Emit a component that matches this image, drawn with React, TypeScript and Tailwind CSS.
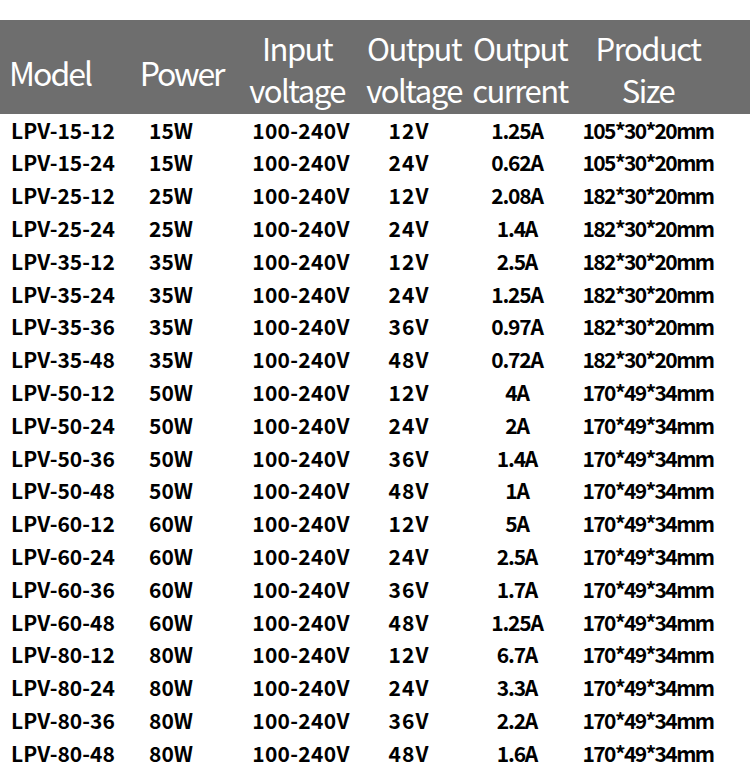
const rows: [string, string, string, string, string, string][] = [
  ["LPV-15-12", "15W", "100-240V", "12V", "1.25A", "105*30*20mm"],
  ["LPV-15-24", "15W", "100-240V", "24V", "0.62A", "105*30*20mm"],
  ["LPV-25-12", "25W", "100-240V", "12V", "2.08A", "182*30*20mm"],
  ["LPV-25-24", "25W", "100-240V", "24V", "1.4A", "182*30*20mm"],
  ["LPV-35-12", "35W", "100-240V", "12V", "2.5A", "182*30*20mm"],
  ["LPV-35-24", "35W", "100-240V", "24V", "1.25A", "182*30*20mm"],
  ["LPV-35-36", "35W", "100-240V", "36V", "0.97A", "182*30*20mm"],
  ["LPV-35-48", "35W", "100-240V", "48V", "0.72A", "182*30*20mm"],
  ["LPV-50-12", "50W", "100-240V", "12V", "4A", "170*49*34mm"],
  ["LPV-50-24", "50W", "100-240V", "24V", "2A", "170*49*34mm"],
  ["LPV-50-36", "50W", "100-240V", "36V", "1.4A", "170*49*34mm"],
  ["LPV-50-48", "50W", "100-240V", "48V", "1A", "170*49*34mm"],
  ["LPV-60-12", "60W", "100-240V", "12V", "5A", "170*49*34mm"],
  ["LPV-60-24", "60W", "100-240V", "24V", "2.5A", "170*49*34mm"],
  ["LPV-60-36", "60W", "100-240V", "36V", "1.7A", "170*49*34mm"],
  ["LPV-60-48", "60W", "100-240V", "48V", "1.25A", "170*49*34mm"],
  ["LPV-80-12", "80W", "100-240V", "12V", "6.7A", "170*49*34mm"],
  ["LPV-80-24", "80W", "100-240V", "24V", "3.3A", "170*49*34mm"],
  ["LPV-80-36", "80W", "100-240V", "36V", "2.2A", "170*49*34mm"],
  ["LPV-80-48", "80W", "100-240V", "48V", "1.6A", "170*49*34mm"],
];

function HeadCell({ lines, className }: { lines: string[]; className: string }) {
  return (
    <div className={`flex flex-col items-center justify-center whitespace-nowrap ${className}`}>
      {lines.map((l) => (
        <span key={l} className="leading-[42px]">
          {l}
        </span>
      ))}
    </div>
  );
}

export default function App() {
  return (
    <div
      className="w-[750px] h-[770px] bg-white overflow-hidden"
      style={{ fontFamily: '"Noto Sans CJK SC", "Noto Sans", sans-serif' }}
    >
      <div className="h-[20px]" />
      {/* header band */}
      <div className="h-[94px] bg-[#6e6e6e] text-white text-[31px] tracking-[-1.5px] font-normal flex items-center pt-[3px]">
        <div className="w-[120px] pl-[9px] text-[32px] tracking-[-2px] pt-[6px] whitespace-nowrap">Model</div>
        <HeadCell lines={["Power"]} className="w-[123px] text-[32px] tracking-[-2.2px] pt-[6px]" />
        <HeadCell lines={["Input", "voltage"]} className="w-[108px]" />
        <HeadCell lines={["Output", "voltage"]} className="w-[126px]" />
        <HeadCell lines={["Output", "current"]} className="w-[86px]" />
        <HeadCell lines={["Product", "Size"]} className="w-[170px]" />
      </div>

      {/* rows */}
      <div className="text-black font-bold text-[21px]">
        {rows.map((r) => (
          <div key={r[0]} className="h-[32.8px] flex items-center whitespace-nowrap">
            <div className="w-[92px] pl-[11px]">{r[0]}</div>
            <div className="w-[158px] flex justify-center">{r[1]}</div>
            <div className="w-[102px] flex justify-center tracking-[0.3px]">{r[2]}</div>
            <div className="w-[114px] flex justify-center tracking-[1px]">{r[3]}</div>
            <div className="w-[102px] flex justify-center tracking-[-1.2px]">{r[4]}</div>
            <div className="w-[160px] flex justify-center tracking-[-1.6px]">{r[5]}</div>
          </div>
        ))}
      </div>
    </div>
  );
}
